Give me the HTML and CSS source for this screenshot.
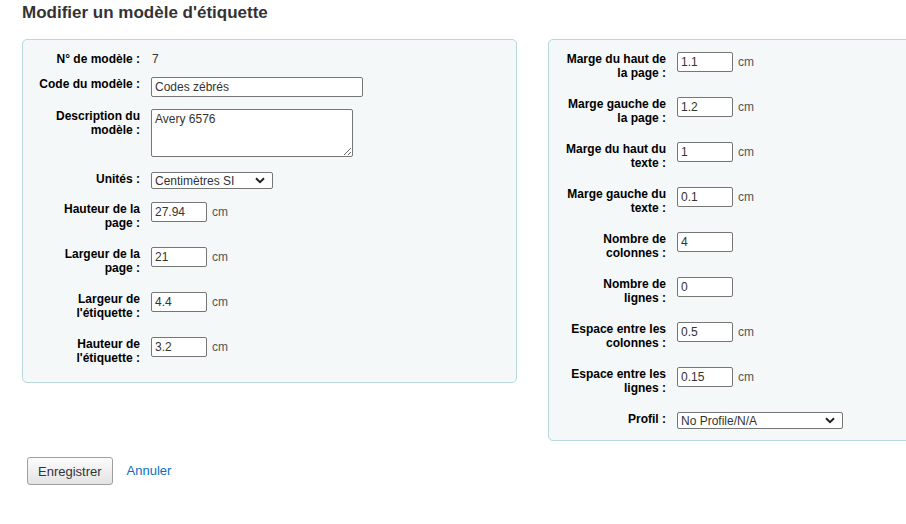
FILE: index.html
```html
<!DOCTYPE html>
<html lang="fr">
<head>
  <meta charset="UTF-8">
  <meta name="viewport" content="width=device-width,initial-scale=1.0">
  <title>Modifier un modèle d'étiquette</title>
  <link rel="stylesheet" href="styles.css">
</head>
<body>

<div class="main">
  <h1>Modifier un modèle d'étiquette</h1>

  <form>
    <div class="columns">
      <fieldset class="rows">
        <ol>
          <li class="row first">
            <span class="label">N° de modèle&nbsp;:</span>
            <span class="value">7</span>
          </li>
          <li class="row">
            <label for="template_code">Code du modèle&nbsp;:</label>
            <input type="text" id="template_code" class="wide" value="Codes zébrés">
          </li>
          <li class="row">
            <label for="template_desc">Description du modèle&nbsp;:</label>
            <textarea id="template_desc">Avery 6576</textarea>
          </li>
          <li class="row sel">
            <label for="units">Unités&nbsp;:</label>
            <span class="select-wrap">
              <select id="units" class="units">
                <option>Centimètres SI</option>
              </select>
              <svg class="chevron" width="10" height="7" viewBox="0 0 10 7"><path d="M1 1.2 5 5.2 9 1.2" fill="none" stroke="#222" stroke-width="2"/></svg>
            </span>
          </li>
          <li class="row two">
            <label for="page_height">Hauteur de la page&nbsp;:</label>
            <input type="text" id="page_height" class="small" value="27.94"><span class="unit">cm</span>
          </li>
          <li class="row two">
            <label for="page_width">Largeur de la page&nbsp;:</label>
            <input type="text" id="page_width" class="small" value="21"><span class="unit">cm</span>
          </li>
          <li class="row two">
            <label for="label_width">Largeur de l'étiquette&nbsp;:</label>
            <input type="text" id="label_width" class="small" value="4.4"><span class="unit">cm</span>
          </li>
          <li class="row two">
            <label for="label_height">Hauteur de l'étiquette&nbsp;:</label>
            <input type="text" id="label_height" class="small" value="3.2"><span class="unit">cm</span>
          </li>
        </ol>
      </fieldset>

      <fieldset class="rows layout">
        <ol>
          <li class="row two">
            <label for="top_margin">Marge du haut de la page&nbsp;:</label>
            <input type="text" id="top_margin" class="small" value="1.1"><span class="unit">cm</span>
          </li>
          <li class="row two">
            <label for="left_margin">Marge gauche de la page&nbsp;:</label>
            <input type="text" id="left_margin" class="small" value="1.2"><span class="unit">cm</span>
          </li>
          <li class="row two">
            <label for="top_text_margin">Marge du haut du texte&nbsp;:</label>
            <input type="text" id="top_text_margin" class="small" value="1"><span class="unit">cm</span>
          </li>
          <li class="row two">
            <label for="left_text_margin">Marge gauche du texte&nbsp;:</label>
            <input type="text" id="left_text_margin" class="small" value="0.1"><span class="unit">cm</span>
          </li>
          <li class="row two">
            <label for="cols">Nombre de colonnes&nbsp;:</label>
            <input type="text" id="cols" class="small" value="4">
          </li>
          <li class="row two">
            <label for="rows">Nombre de lignes&nbsp;:</label>
            <input type="text" id="rows" class="small" value="0">
          </li>
          <li class="row two">
            <label for="col_gap">Espace entre les colonnes&nbsp;:</label>
            <input type="text" id="col_gap" class="small" value="0.5"><span class="unit">cm</span>
          </li>
          <li class="row two">
            <label for="row_gap">Espace entre les lignes&nbsp;:</label>
            <input type="text" id="row_gap" class="small" value="0.15"><span class="unit">cm</span>
          </li>
          <li class="row">
            <label for="profile">Profil&nbsp;:</label>
            <span class="select-wrap">
              <select id="profile" class="profile">
                <option>No Profile/N/A</option>
              </select>
              <svg class="chevron" width="10" height="7" viewBox="0 0 10 7"><path d="M1 1.2 5 5.2 9 1.2" fill="none" stroke="#222" stroke-width="2"/></svg>
            </span>
          </li>
        </ol>
      </fieldset>
    </div>

    <div class="action">
      <button type="button" class="btn">Enregistrer</button>
      <a href="#" class="cancel">Annuler</a>
    </div>
  </form>
</div>

</body>
</html>
```

FILE: styles.css
```css
html, body {
  overflow: hidden;
}
body {
  margin: 0;
  font-family: "Liberation Sans", Arial, sans-serif;
  font-size: 12px;
  color: #000;
  background: #fff;
}
.main {
  padding: 3px 22px 0;
  width: 1021px;
}
h1 {
  margin: 0 0 16px;
  font-size: 17px;
  font-weight: bold;
  color: #333;
}
.columns {
  display: flex;
  align-items: flex-start;
  gap: 31px;
}
fieldset.rows {
  width: 495px;
  box-sizing: border-box;
  margin: 0;
  padding: 6px 14px 6px 14px;
  border: 1px solid #b9d8d9;
  border-radius: 5px;
  background: #f4f8f9;
}
fieldset.layout {
  padding-bottom: 5px;
}
fieldset.rows ol {
  list-style: none;
  margin: 0;
  padding: 0;
}
.row {
  display: flex;
  align-items: flex-start;
  padding: 6px 0;
}
.row.first {
  padding-bottom: 5px;
}
.row.sel {
  padding-bottom: 7px;
}
.row.two {
  padding-bottom: 11px;
}
.row label,
.row .label {
  flex: 0 0 103px;
  margin-right: 11px;
  text-align: right;
  font-weight: bold;
  line-height: 14px;
}
.value {
  line-height: 14px;
  color: #333;
  padding-left: 1px;
}
input, textarea, select {
  font-family: "Liberation Sans", Arial, sans-serif;
  font-size: 12px;
  color: #333;
  box-sizing: border-box;
  border: 1px solid #767676;
  border-radius: 2px;
  background: #fff;
  margin: 0;
}
input {
  height: 20px;
  padding: 1px 3px;
}
input.wide {
  width: 212px;
}
input.small {
  width: 56px;
}
textarea {
  width: 202px;
  height: 48px;
  padding: 2px 3px;
  margin-bottom: 3px;
  resize: vertical;
}
.select-wrap {
  position: relative;
  display: inline-block;
  height: 17px;
}
select {
  height: 17px;
  padding: 0 0 0 3px;
  appearance: none;
  -webkit-appearance: none;
  display: block;
}
.chevron {
  position: absolute;
  right: 8px;
  top: 5px;
  pointer-events: none;
}
select.units {
  width: 122px;
}
select.profile {
  width: 166px;
}
.unit {
  margin-left: 5px;
  line-height: 20px;
  color: #555;
}
.action {
  margin-top: 16px;
  padding-left: 5px;
  display: flex;
  align-items: center;
}
.btn {
  font-family: "Liberation Sans", Arial, sans-serif;
  font-size: 13px;
  color: #333;
  height: 28px;
  padding: 0 10px;
  border: 1px solid #a0a0a0;
  border-radius: 3px;
  background: linear-gradient(to bottom, #fcfcfc, #e3e3e3);
  cursor: pointer;
}
.cancel {
  margin-left: 14px;
  margin-top: -2px;
  font-size: 13px;
  color: #0a6ebd;
  text-decoration: none;
}
```
